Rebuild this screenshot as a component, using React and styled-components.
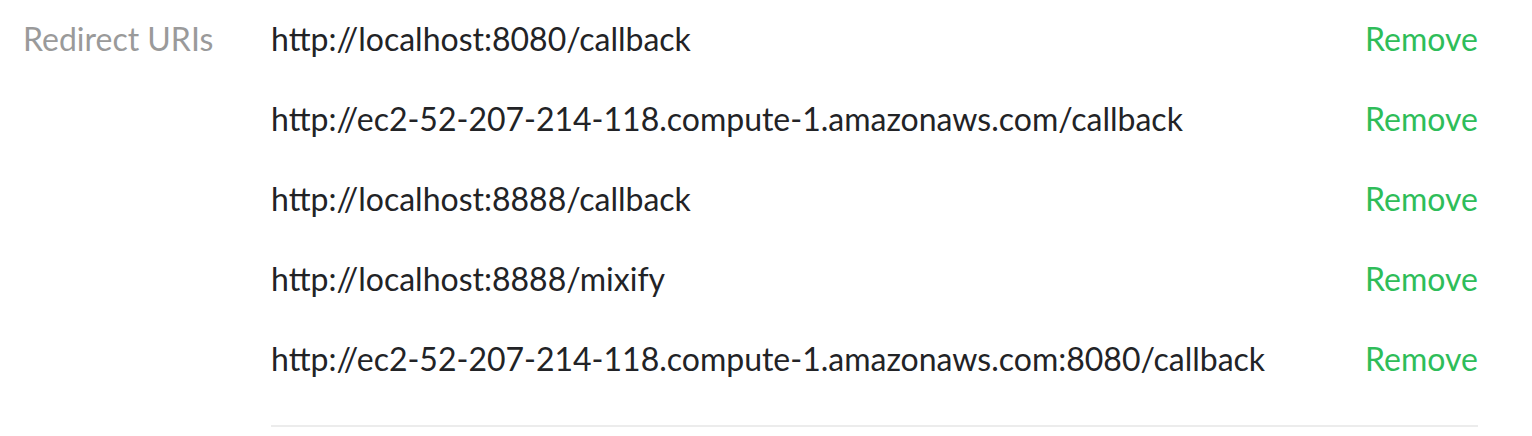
import React from 'react'
import styled, { createGlobalStyle } from 'styled-components'

const GlobalStyle = createGlobalStyle`
  html, body {
    margin: 0;
    padding: 0;
    background: #fff;
  }
  body {
    font-family: Lato, "Noto Sans", sans-serif;
  }
`

const Section = styled.section`
  display: grid;
  grid-template-columns: 248px 1fr;
  padding: 0 54px 0 23px;
`

const Label = styled.div`
  height: 80px;
  box-sizing: border-box;
  padding-bottom: 4px;
  display: flex;
  align-items: center;
  font-size: 32px;
  color: #9a9a9a;
`

const List = styled.div`
  display: flex;
  flex-direction: column;
  border-bottom: 2px solid #ececec;
  padding-bottom: 25px;
`

const Row = styled.div`
  height: 80px;
  box-sizing: border-box;
  padding-bottom: 4px;
  display: flex;
  align-items: center;
  justify-content: space-between;
  font-size: 32px;
`

const Uri = styled.span`
  color: #222326;
`

const RemoveButton = styled.button`
  border: none;
  background: none;
  padding: 0;
  font: inherit;
  color: #2ebd59;
  cursor: pointer;
`

const uris = [
  'http://localhost:8080/callback',
  'http://ec2-52-207-214-118.compute-1.amazonaws.com/callback',
  'http://localhost:8888/callback',
  'http://localhost:8888/mixify',
  'http://ec2-52-207-214-118.compute-1.amazonaws.com:8080/callback',
]

const App = () => (
  <>
    <GlobalStyle />
    <Section>
      <Label>Redirect URIs</Label>
      <List>
        {uris.map((uri) => (
          <Row key={uri}>
            <Uri>{uri}</Uri>
            <RemoveButton>Remove</RemoveButton>
          </Row>
        ))}
      </List>
    </Section>
  </>
)

export default App
